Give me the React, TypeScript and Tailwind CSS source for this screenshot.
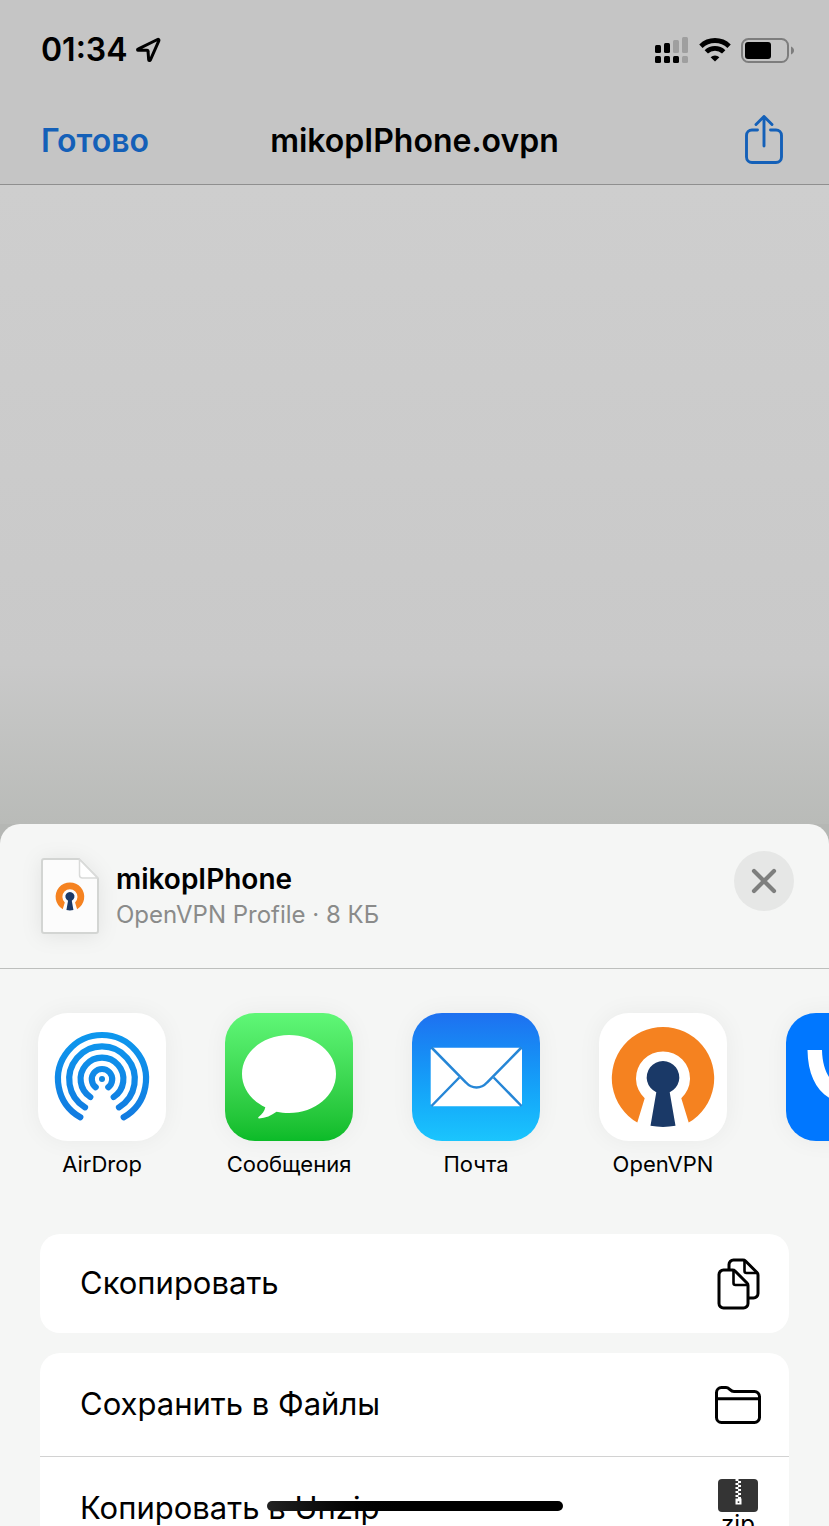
import type { ReactNode } from "react";

function LocationIcon() {
  return (
    <svg width="25" height="26" viewBox="0 0 25 26" fill="none" aria-hidden="true">
      <path
        d="M2 12.2 21.500 2.500c.9-.4 1.700.4 1.300 1.300L14.300 23.100c-.4.800-1.500.6-1.600-.3L12 14.200c0-.6-.4-1-1-1L2.200 13.300c-.7 0-.9-.8-.2-1.100Z"
        stroke="black"
        strokeWidth="3"
        strokeLinejoin="round"
      />
    </svg>
  );
}

function CellularIcon() {
  return (
    <svg width="33" height="26" viewBox="0 0 33 26" aria-hidden="true">
      <rect x="0" y="8" width="6" height="8" rx="1.500" />
      <rect x="9" y="6" width="6" height="10" rx="1.500" />
      <rect x="18" y="3" width="6" height="13" rx="1.500" fill="#9f9f9f" />
      <rect x="27" y="0" width="6" height="16" rx="1.500" fill="#9f9f9f" />
      <rect x="0" y="19" width="6" height="7" rx="1.500" />
      <rect x="9" y="19" width="6" height="7" rx="1.500" />
      <rect x="18" y="19" width="6" height="7" rx="1.500" />
      <rect x="27" y="19" width="6" height="7" rx="1.500" fill="#9f9f9f" />
    </svg>
  );
}

function WifiIcon() {
  return (
    <svg width="32" height="24" viewBox="0 0 32 24" fill="none" aria-hidden="true">
      <path d="M1.900 8.200a20.300 20.300 0 0 1 28.200 0" stroke="black" strokeWidth="4.800" />
      <path d="M7.300 13.900a12.500 12.500 0 0 1 17.400 0" stroke="black" strokeWidth="4.800" />
      <path d="M16 23.500 11.600 19.200a6.500 6.500 0 0 1 8.800 0Z" fill="black" />
    </svg>
  );
}

function BatteryIcon() {
  return (
    <svg width="53" height="25" viewBox="0 0 53 25" aria-hidden="true">
      <rect x="1" y="1" width="46" height="23" rx="6.500" fill="none" stroke="#7d7d7d" strokeWidth="2" />
      <rect x="4" y="4" width="26" height="17" rx="3" />
      <path d="M50 8.500c4 1.500 4 6.500 0 8Z" fill="#7d7d7d" />
    </svg>
  );
}

function ShareIcon() {
  return (
    <svg width="38" height="50" viewBox="0 0 38 50" fill="none" aria-hidden="true">
      <path
        d="M12.500 15H7a5.500 5.500 0 0 0-5.500 5.500v21.500A5.500 5.500 0 0 0 7 47.500h24a5.500 5.500 0 0 0 5.500-5.500V20.500A5.500 5.500 0 0 0 31 15h-5.500M19 31V2M11 9.500 19 1.500l8 8"
        stroke="#1460b8"
        strokeWidth="2.900"
        strokeLinecap="round"
        strokeLinejoin="round"
      />
    </svg>
  );
}

function OpenVpnMark() {
  return (
    <>
      <path d="M38.300 109.500A51.200 51.200 0 1 1 89.700 109.500L82.300 85.300A27 27 0 1 0 45.700 85.300Z" fill="#f58220" />
      <path
        d="M57.300 79.200A16.300 16.300 0 1 1 70.700 79.200L76.500 112.800Q64 115 51.500 112.800Z"
        fill="#1a3967"
      />
    </>
  );
}

function ProfileFileIcon() {
  return (
    <svg
      className="shrink-0 drop-shadow-[0_2px_10px_rgba(0,0,0,0.08)]"
      width="58"
      height="76"
      viewBox="0 0 58 76"
      aria-hidden="true"
    >
      <path
        d="M3 1H38L57 20.500V73a2 2 0 0 1-2 2H3a2 2 0 0 1-2-2V3a2 2 0 0 1 2-2Z"
        fill="#fcfcfc"
        stroke="#d3d5d3"
        strokeWidth="2"
      />
      <path d="M38.500 1.500V17a3 3 0 0 0 3 3H56.500Z" fill="white" stroke="#d9dad9" strokeWidth="1.500" />
      <g transform="translate(11 20.500) scale(.28)">
        <OpenVpnMark />
      </g>
    </svg>
  );
}

function CloseIcon() {
  return (
    <svg width="26" height="26" viewBox="0 0 26 26" aria-hidden="true">
      <path d="M3 3l20 20M23 3 3 23" stroke="#7e7f7e" strokeWidth="4.200" strokeLinecap="round" />
    </svg>
  );
}

function AirDropIcon() {
  return (
    <svg viewBox="0 0 128 128" fill="none" aria-hidden="true">
      <defs>
        <linearGradient id="airdrop" x1="0" y1="18" x2="0" y2="108" gradientUnits="userSpaceOnUse">
          <stop stopColor="#0d98ee" />
          <stop offset="1" stopColor="#127ae0" />
        </linearGradient>
      </defs>
      <g stroke="url(#airdrop)" strokeWidth="6.200" strokeLinecap="round">
        <path d="M42.300 104.300A44 44 0 1 1 85.700 104.300" />
        <path d="M47 94.300A32.800 32.800 0 1 1 81 94.300" />
        <path d="M52.300 84A21.400 21.400 0 1 1 75.700 84" />
        <path d="M57.700 74.200A10.200 10.200 0 1 1 70.300 74.200" />
      </g>
      <circle cx="64" cy="66" r="3" fill="#1286dd" />
    </svg>
  );
}

function MessagesIcon() {
  return (
    <svg viewBox="0 0 128 128" aria-hidden="true">
      <path
        d="M64 22c26 0 47 17.400 47 39s-21 39-47 39c-4.500 0-8.500-.4-12.500-1.300-5 3.800-11 6.300-17.500 6.700-.9 0-1-.9-.4-1.400 3.600-2.600 6-6 6.700-9.700C26 87.300 17 75 17 61c0-21.600 21-39 47-39Z"
        fill="white"
      />
    </svg>
  );
}

function MailIcon() {
  return (
    <svg viewBox="0 0 128 128" fill="none" aria-hidden="true">
      <rect x="18.700" y="34.700" width="91.300" height="58.600" rx="2.500" fill="white" />
      <g stroke="#2686d6" strokeWidth="2.500">
        <path d="M19.500 34.500 54 69.500c6 6.700 15 6.700 21 0L109.500 34.500" />
        <path d="M47.300 64.500 19.500 93M81.700 64.500 109.500 93" />
      </g>
    </svg>
  );
}

function OpenVpnIcon() {
  return (
    <svg viewBox="0 0 128 128" aria-hidden="true">
      <OpenVpnMark />
    </svg>
  );
}

function VkIcon() {
  return (
    <svg viewBox="0 0 128 128" fill="white" aria-hidden="true">
      <path d="M67.500 91C38.500 91 22 71 21.500 37H36c.5 24.500 11.500 35 20 37V37h13.700v21.700C78 57.800 86.800 48 89.800 37h13.700c-2.300 13-11.900 22.700-18.700 27.100 6.800 3.200 17.700 11.500 21.900 26.900H91.600c-3.200-10.100-11.300-17.900-21.900-19V91Z" />
    </svg>
  );
}

function CopyIcon() {
  return (
    <svg
      width="43"
      height="52"
      viewBox="0 0 43 52"
      fill="none"
      stroke="black"
      strokeWidth="3"
      strokeLinejoin="round"
      aria-hidden="true"
    >
      <path d="M12 11V6.500A4.500 4.500 0 0 1 16.500 2H26Q27.500 2 28.500 3L40 14.500Q41 15.500 41 17V35.500a4.500 4.500 0 0 1-4.500 4.500H31" />
      <path d="M27.500 3V13a2 2 0 0 0 2 2H40" strokeWidth="2.600" />
      <path d="M6.500 12H15.500Q17 12 18 13L30 25Q31 26 31 27.500V45.500a4.500 4.500 0 0 1-4.500 4.500H6.500A4.500 4.500 0 0 1 2 45.500V16.500A4.500 4.500 0 0 1 6.500 12Z" />
      <path d="M16.500 13V25a2 2 0 0 0 2 2H30" strokeWidth="2.600" />
    </svg>
  );
}

function FolderIcon() {
  return (
    <svg
      width="46"
      height="38"
      viewBox="0 0 46 38"
      fill="none"
      stroke="black"
      strokeWidth="3"
      strokeLinejoin="round"
      aria-hidden="true"
    >
      <path d="M1.500 12.700V6.500A5 5 0 0 1 6.500 1.500H11c3.500 0 4 4 8 4H39.500a5 5 0 0 1 5 5V31.500a5 5 0 0 1-5 5H6.500a5 5 0 0 1-5-5ZM1.500 12.700H44.500" />
    </svg>
  );
}

function ZipIcon() {
  return (
    <span className="flex flex-col items-center pb-[3px]">
      <svg width="40" height="33" viewBox="0 0 40 33" aria-hidden="true">
        <rect width="40" height="33" rx="4" fill="#343434" />
        <path
          d="M17.500 0h3v2h-3zM20 2h3v2h-3zM17.500 4h3v2h-3zM20 6h3v2h-3zM17.500 8h3v2h-3zM20 10h3v2h-3zM17.500 12h3v2h-3zM20 14h3v2h-3zM17.500 16h3v2h-3zM20 18h3v1.500h-3zM17.500 19.500h6v6h-6z"
          fill="white"
        />
        <rect x="19.700" y="22.300" width="1.600" height="1.600" fill="#343434" />
      </svg>
      <span className="text-2xl leading-6">zip</span>
    </span>
  );
}

type AppTarget = { name: string; hideName?: boolean; tile: string; icon: ReactNode };

const apps: AppTarget[] = [
  { name: "AirDrop", tile: "bg-white", icon: <AirDropIcon /> },
  { name: "Сообщения", tile: "bg-linear-to-b from-[#5ff777] to-[#0abb28]", icon: <MessagesIcon /> },
  { name: "Почта", tile: "bg-linear-to-b from-[#1e70f0] to-[#1bc5fd]", icon: <MailIcon /> },
  { name: "OpenVPN", tile: "bg-white", icon: <OpenVpnIcon /> },
  { name: "VK", hideName: true, tile: "bg-[#0077ff]", icon: <VkIcon /> },
];

function AppButton({ app }: { app: AppTarget }) {
  return (
    <button type="button" aria-label={app.name} className="flex w-32 shrink-0 flex-col items-center gap-[7px]">
      <span className={`block size-32 rounded-[30px] shadow-[0_0_24px_rgba(0,0,0,0.05)] ${app.tile}`}>{app.icon}</span>
      {!app.hideName && <span className="text-[22px] leading-8 whitespace-nowrap">{app.name}</span>}
    </button>
  );
}

function ActionRow({ label, icon }: { label: string; icon: ReactNode }) {
  return (
    <button type="button" className="flex h-[104px] w-full shrink-0 items-center justify-between pr-7 pl-10 text-left">
      <span className="pb-[2px] text-[31px] leading-10">{label}</span>
      <span className="flex w-[46px] justify-center">{icon}</span>
    </button>
  );
}

export default function App() {
  return (
    <div className="relative flex h-screen flex-col overflow-hidden bg-[#c5c5c5] font-['Inter','Noto_Sans',sans-serif] text-black">
      <header className="shrink-0 border-b border-[#8f8f8f] bg-[#c5c5c5]">
        <div className="flex h-[100px] items-center justify-between pr-[35px] pl-[41px]">
          <div className="flex items-center gap-2">
            <span className="text-[32px] leading-10 font-semibold">01:34</span>
            <LocationIcon />
          </div>
          <div className="flex items-center">
            <CellularIcon />
            <span className="mr-[10px] ml-[11px]">
              <WifiIcon />
            </span>
            <BatteryIcon />
          </div>
        </div>
        <div className="grid h-[84px] grid-cols-[1fr_auto_1fr] items-start px-[41px]">
          <button type="button" className="mt-[21px] justify-self-start text-[32px] leading-10 font-semibold text-[#1460b8]">
            Готово
          </button>
          <h1 className="mt-[21px] text-[32px] leading-10 font-semibold">mikopIPhone.ovpn</h1>
          <button type="button" aria-label="Поделиться" className="mt-[15px] mr-[5px] justify-self-end">
            <ShareIcon />
          </button>
        </div>
      </header>

      <main className="flex-1 bg-linear-to-b from-[#cecece] from-0% via-[#c9c9c9] via-75% to-[#b9bbb8] to-100%" />

      <div className="h-[46vh] shrink-0 bg-[#b5b7b4]">
        <section aria-label="Поделиться" className="flex h-full flex-col overflow-hidden rounded-t-[20px] bg-[#f5f6f5]">
          <div className="flex h-[145px] shrink-0 items-start border-b border-[#bdbfbd] pt-[27px] pr-[35px] pl-[41px]">
            <div className="flex flex-1 items-center gap-[17px] pt-[7px]">
              <ProfileFileIcon />
              <div className="pt-0.5">
                <h2 className="text-[28px] leading-9 font-semibold">mikopIPhone</h2>
                <p className="text-2xl leading-9 text-[#8a8b8a]">OpenVPN Profile · 8 КБ</p>
              </div>
            </div>
            <button
              type="button"
              aria-label="Закрыть"
              className="flex size-[60px] items-center justify-center rounded-full bg-[#e6e7e6]"
            >
              <CloseIcon />
            </button>
          </div>

          <div className="flex shrink-0 gap-[59px] overflow-x-auto pt-11 pb-[54px] pl-[38px] [scrollbar-width:none]">
            {apps.map((app) => (
              <AppButton key={app.name} app={app} />
            ))}
          </div>

          <div className="mx-10 flex flex-col gap-5">
            <div className="flex h-[99px] items-center rounded-[20px] bg-white">
              <ActionRow label="Скопировать" icon={<CopyIcon />} />
            </div>
            <div className="divide-y divide-[#d2d2d2] rounded-[20px] bg-white">
              <ActionRow label="Сохранить в Файлы" icon={<FolderIcon />} />
              <ActionRow label="Копировать в Unzip" icon={<ZipIcon />} />
            </div>
          </div>
        </section>
      </div>

      <div className="absolute bottom-[15px] left-1/2 h-[10px] w-[296px] -translate-x-1/2 rounded-full bg-linear-to-r from-[#222222] to-black to-50%" />
    </div>
  );
}
